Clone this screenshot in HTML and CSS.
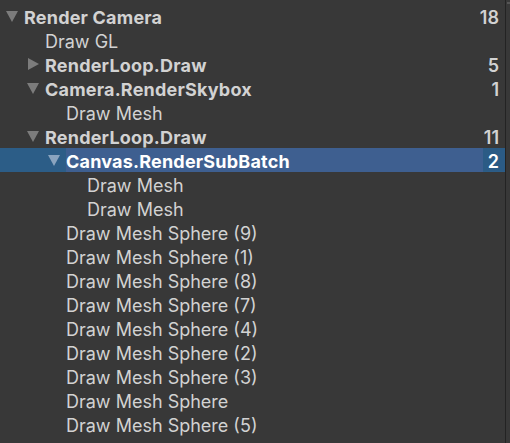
FILE: index.html
```html
<!DOCTYPE html>
<html>
<head>
<meta charset="utf-8">
<link rel="stylesheet" href="styles.css">
</head>
<body>
<div class="panel">
  <div class="tree">
    <div class="row l0"><span class="arrow open"></span><span class="label bold">Render Camera</span><span class="count">18</span></div>
    <div class="row l1"><span class="arrow"></span><span class="label">Draw GL</span></div>
    <div class="row l1"><span class="arrow closed"></span><span class="label bold">RenderLoop.Draw</span><span class="count">5</span></div>
    <div class="row l1"><span class="arrow open"></span><span class="label bold">Camera.RenderSkybox</span><span class="count">1</span></div>
    <div class="row l2"><span class="arrow"></span><span class="label">Draw Mesh</span></div>
    <div class="row l1"><span class="arrow open"></span><span class="label bold">RenderLoop.Draw</span><span class="count">11</span></div>
    <div class="row l2 selected"><span class="arrow open"></span><span class="label bold">Canvas.RenderSubBatch</span><span class="count">2</span></div>
    <div class="row l3"><span class="arrow"></span><span class="label">Draw Mesh</span></div>
    <div class="row l3"><span class="arrow"></span><span class="label">Draw Mesh</span></div>
    <div class="row l2"><span class="arrow"></span><span class="label">Draw Mesh Sphere (9)</span></div>
    <div class="row l2"><span class="arrow"></span><span class="label">Draw Mesh Sphere (1)</span></div>
    <div class="row l2"><span class="arrow"></span><span class="label">Draw Mesh Sphere (8)</span></div>
    <div class="row l2"><span class="arrow"></span><span class="label">Draw Mesh Sphere (7)</span></div>
    <div class="row l2"><span class="arrow"></span><span class="label">Draw Mesh Sphere (4)</span></div>
    <div class="row l2"><span class="arrow"></span><span class="label">Draw Mesh Sphere (2)</span></div>
    <div class="row l2"><span class="arrow"></span><span class="label">Draw Mesh Sphere (3)</span></div>
    <div class="row l2"><span class="arrow"></span><span class="label">Draw Mesh Sphere</span></div>
    <div class="row l2"><span class="arrow"></span><span class="label">Draw Mesh Sphere (5)</span></div>
  </div>
  <div class="divider"></div>
  <div class="gutter"><span class="tick"></span></div>
</div>
</body>
</html>
```
FILE: styles.css
```css
html, body {
  margin: 0;
  padding: 0;
  background: #383838;
}
.panel {
  display: flex;
  width: 510px;
  height: 443px;
  overflow: hidden;
  font-family: Inter, "Noto Sans", sans-serif;
  font-size: 18px;
  color: #d2d2d2;
}
.tree {
  width: 505px;
  padding-top: 4px;
}
.divider {
  width: 1px;
  background: #232323;
}
.gutter {
  flex: 1;
  position: relative;
}
.tick {
  position: absolute;
  left: 1px;
  top: 2px;
  width: 3px;
  height: 2px;
  background: #555;
}
.row {
  display: flex;
  align-items: stretch;
  height: 24px;
  white-space: nowrap;
}
.l0 { padding-left: 5px; }
.l1 { padding-left: 26px; }
.l2 { padding-left: 47px; }
.l3 { padding-left: 68px; }
.arrow {
  width: 19px;
  height: 24px;
  flex: none;
  position: relative;
}
.arrow.open::before {
  content: "";
  position: absolute;
  left: 1px;
  top: 7px;
  border-left: 6px solid transparent;
  border-right: 6px solid transparent;
  border-top: 11px solid #7c7c7c;
}
.arrow.closed::before {
  content: "";
  position: absolute;
  left: 2px;
  top: 6px;
  border-top: 6px solid transparent;
  border-bottom: 6px solid transparent;
  border-left: 11px solid #7c7c7c;
}
.label,
.count {
  box-sizing: border-box;
  height: 24px;
  padding-top: 2px;
  line-height: 24px;
}
.label {
  flex: 1;
}
.bold {
  font-weight: 700;
  letter-spacing: 0.2px;
}
.count {
  font-weight: 600;
  padding-left: 5px;
  padding-right: 6px;
  text-align: right;
}
.selected {
  background: #2c5d87;
  color: #ffffff;
}
.selected .arrow.open::before {
  border-top-color: #8aa4bf;
}
.selected .label {
  background: #3e5f90;
}
.selected .count {
  background: #2b5b85;
  height: 23px;
}
```
